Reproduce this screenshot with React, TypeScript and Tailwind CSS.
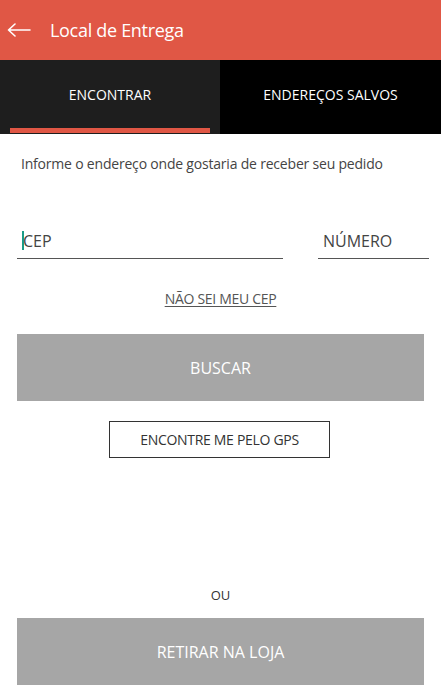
import React from "react";

export default function App() {
  return (
    <div className="w-[441px] h-[697px] bg-white flex flex-col overflow-hidden" style={{ fontFamily: '"Open Sans", "Noto Sans", sans-serif' }}>
      <div className="h-[60px] bg-[#e05745] flex items-center shrink-0">
        <svg width="24" height="14" viewBox="0 0 24 14" className="ml-[7px]">
          <path d="M23 7H1.5M8 1L1.5 7L8 13" fill="none" stroke="#fff" strokeWidth="1.6" strokeLinecap="round" strokeLinejoin="round" />
        </svg>
        <span className="ml-[19px] text-white text-[18px] tracking-[-0.3px]">Local de Entrega</span>
      </div>
      <div className="h-[74px] flex shrink-0">
        <div className="w-[220px] bg-[#1e1e1e] flex flex-col">
          <div className="flex-1 flex items-center justify-center text-white text-[14px] pt-[1px]">ENCONTRAR</div>
          <div className="h-[5px] mx-[10px] mb-[1px] bg-[#e05745]" />
        </div>
        <div className="flex-1 bg-black flex items-center justify-center text-white text-[14px] pb-[5px]">ENDEREÇOS SALVOS</div>
      </div>
      <div className="px-[17px] flex flex-col flex-1">
        <p className="mt-[21px] ml-[4px] text-[14px] text-[#444] leading-[18px] tracking-[-0.2px]">Informe o endereço onde gostaria de receber seu pedido</p>
        <div className="mt-[55px] flex justify-between">
          <div className="w-[266px] border-b-[1.5px] border-[#555] h-[31px] flex items-center pb-[4px] relative">
            <span className="absolute left-[5px] top-[3px] w-[2px] h-[19px] bg-[#1a9c87]" />
            <span className="ml-[6px] text-[16px] text-[#444] leading-none">CEP</span>
          </div>
          <div className="w-[111px] border-b-[1.5px] border-[#555] h-[31px] flex items-center pb-[4px] mr-[-5px]">
            <span className="ml-[5px] text-[16px] text-[#444] leading-none">NÚMERO</span>
          </div>
        </div>
        <div className="mt-[29px] text-center leading-[20px]">
          <span className="text-[14px] text-[#555] underline underline-offset-2 tracking-[-0.3px]">NÃO SEI MEU CEP</span>
        </div>
        <button className="mt-[25px] h-[67px] w-full bg-[#a6a6a6] text-white text-[16px]">BUSCAR</button>
        <div className="mt-[20px] flex justify-center">
          <button className="w-[221px] h-[37px] border border-[#333] text-[14px] text-[#333] bg-white ml-[-2px] tracking-[-0.3px]">ENCONTRE ME PELO GPS</button>
        </div>
        <div className="mt-[128px] text-center text-[13px] text-[#333] leading-[18px]">OU</div>
        <button className="mt-[14px] h-[67px] w-full bg-[#a6a6a6] text-white text-[16px]">RETIRAR NA LOJA</button>
      </div>
    </div>
  );
}
